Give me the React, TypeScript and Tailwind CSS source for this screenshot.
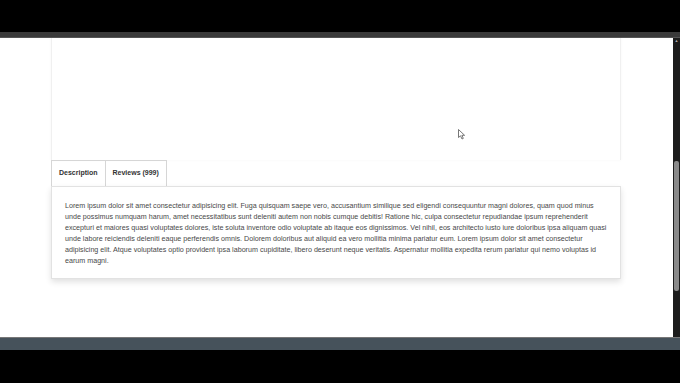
const lines = [
  'Lorem ipsum dolor sit amet consectetur adipisicing elit. Fuga quisquam saepe vero, accusantium similique sed eligendi consequuntur magni dolores, quam quod minus',
  'unde possimus numquam harum, amet necessitatibus sunt deleniti autem non nobis cumque debitis! Ratione hic, culpa consectetur repudiandae ipsum reprehenderit',
  'excepturi et maiores quasi voluptates dolores, iste soluta inventore odio voluptate ab itaque eos dignissimos. Vel nihil, eos architecto iusto iure doloribus ipsa aliquam quasi',
  'unde labore reiciendis deleniti eaque perferendis omnis. Dolorem doloribus aut aliquid ea vero mollitia minima pariatur eum. Lorem ipsum dolor sit amet consectetur',
  'adipisicing elit. Atque voluptates optio provident ipsa laborum cupiditate, libero deserunt neque veritatis. Aspernatur mollitia expedita rerum pariatur qui nemo voluptas id',
  'earum magni.',
];

export default function App() {
  return (
    <div className="w-[680px] h-[383px] bg-black flex flex-col overflow-hidden" style={{ fontFamily: '"Liberation Sans", Arial, sans-serif' }}>
      <div className="h-[32px] shrink-0" />
      <div className="h-[6px] shrink-0 bg-[#3a3a3a] border-b border-[#555]" />

      <div className="flex h-[299px] shrink-0">
        {/* page */}
        <div className="relative flex-1 bg-white pl-[51px] pr-[52px] flex flex-col">
          {/* product card top */}
          <div className="h-[122px] shrink-0 border-x border-[#f0f0f0] shadow-[0_0_3px_rgba(0,0,0,0.04)]" />

          {/* tabs */}
          <div className="flex h-[26px] shrink-0">
            <div className="flex items-center px-[7px] border border-b-0 border-[#d6d6d6] text-[7px] font-bold text-[#333]">
              Description
            </div>
            <div className="flex items-center px-[7px] border border-l-0 border-b-0 border-[#d6d6d6] text-[7px] font-bold text-[#333]">
              Reviews (999)
            </div>
          </div>

          {/* tab content */}
          <div className="h-[93px] w-full min-w-0 shrink-0 overflow-hidden border border-[#e2e2e2] bg-white shadow-[0_3px_6px_rgba(0,0,0,0.12)] pt-[14px] pl-[13px] pr-[8px]">
            <p className="text-[7.15px] leading-[11px] text-[#484848] whitespace-nowrap">
              {lines.map((l, i) => (
                <span key={i} className="block">{l}</span>
              ))}
            </p>
          </div>

          {/* mouse cursor */}
          <svg className="absolute left-[458px] top-[91px]" width="8" height="11" viewBox="0 0 8 11">
            <path d="M0.5 0.5 L0.5 8.5 L2.5 6.8 L4 10 L5.3 9.4 L3.9 6.3 L6.6 6.3 Z" fill="#fff" stroke="#555" strokeWidth="0.8" />
          </svg>
        </div>

        {/* scrollbar */}
        <div className="w-[7px] shrink-0 bg-[#1c1c1c] flex flex-col items-center">
          <div className="h-[4px] mt-[1px] text-[4px] leading-none text-[#aaa]">▲</div>
          <div className="h-[118px]" />
          <div className="w-[5px] h-[130px] rounded-[2px] bg-[#8a8a8a]" />
          <div className="flex-1" />
        </div>
      </div>

      <div className="h-[13px] shrink-0 bg-[#46525b] border-t border-[#777]" />
      <div className="flex-1 bg-black" />
    </div>
  );
}
